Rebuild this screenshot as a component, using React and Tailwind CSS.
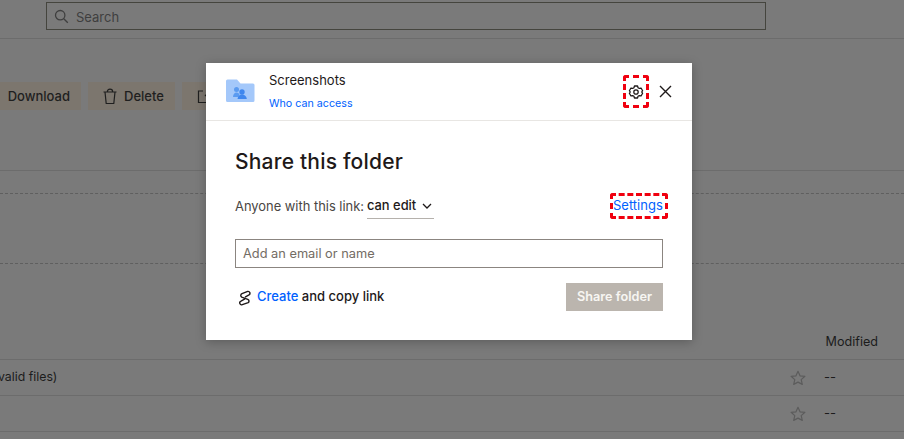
import React from "react";

const font = { fontFamily: "Inter, 'Liberation Sans', sans-serif" };

function Star() {
  return (
    <svg width="16" height="16" viewBox="0 0 16 16" fill="none" stroke="#5c5c5c" strokeWidth="1.2" strokeLinejoin="round">
      <path d="M8 1.3l2 4.500 4.900.5-3.700 3.300 1.100 4.800L8 12.100l-4.300 2.300 1.100-4.800L1.100 6.300 6 5.800z" />
    </svg>
  );
}

function Background() {
  return (
    <div className="flex h-[439px] flex-col bg-[#7a7a7a]">
      <div className="h-[39px] shrink-0 border-b border-[#6c6c6c] pl-[46px] pt-[2px]">
        <div className="flex h-[28px] w-[720px] items-center gap-[7px] border border-[#45453e] pl-[7px]">
          <svg width="15" height="15" viewBox="0 0 15 15" fill="none" stroke="#3f3f3f" strokeWidth="1.3">
            <circle cx="6.200" cy="6.200" r="4.700" />
            <path d="M9.800 9.800l4 4" />
          </svg>
          <span className="mt-[2px] text-[13px] leading-none text-[#3f3f3f]">Search</span>
        </div>
      </div>
      <div className="flex h-[132px] shrink-0 gap-[7px] border-b border-[#6c6c6c] pt-[43px]">
        <div className="flex h-[28px] w-[81px] items-center justify-end bg-[#7c766e] pr-[11px] pt-[1px] text-[13px] font-medium text-[#1f1f1f]">
          Download
        </div>
        <div className="flex h-[28px] w-[87px] items-center gap-[6px] bg-[#7c766e] pl-[14px] pt-[1px] text-[13px] font-medium text-[#1f1f1f]">
          <svg width="16" height="17" viewBox="0 0 16 17" fill="none" stroke="#1f1f1f" strokeWidth="1.200" strokeLinejoin="round">
            <path d="M1.500 4h13M3 4l1.200 11.500h7.600L13 4M5.300 4c0-1.800 1-2.800 2.700-2.800s2.700 1 2.700 2.800" />
          </svg>
          Delete
        </div>
        <div className="flex h-[28px] w-[30px] items-center bg-[#7c766e] pl-[15px]">
          <svg width="15" height="15" viewBox="0 0 15 15" fill="none" stroke="#1f1f1f" strokeWidth="1.200">
            <path d="M6 2H1.500v11.500H13V9M8 7l5-5M9 2h4v4" />
          </svg>
        </div>
      </div>
      <div className="h-[23px] shrink-0 border-b border-dashed border-[#5f5f5f]" />
      <div className="h-[70px] shrink-0 border-b border-dashed border-[#5f5f5f]" />
      <div className="flex h-[96px] shrink-0 items-end justify-end border-b border-[#6c6c6c] pb-[9px] pr-[26px] text-[12.600px] leading-4 text-[#1c1c1c]">
        Modified
      </div>
      <div className="flex h-[36px] shrink-0 items-center justify-between border-b border-[#6c6c6c] pr-[68px] text-[13px] text-[#1c1c1c]">
        <span className="-ml-[2px] text-[12.300px]">valid files)</span>
        <span className="flex items-center gap-[18px]">
          <Star />
          <span>--</span>
        </span>
      </div>
      <div className="flex h-[36px] shrink-0 items-center justify-end border-b border-[#6c6c6c] pr-[68px] text-[13px] text-[#1c1c1c]">
        <span className="flex items-center gap-[18px]">
          <Star />
          <span>--</span>
        </span>
      </div>
    </div>
  );
}

function Modal() {
  return (
    <div className="absolute left-[206px] top-[63px] h-[277px] w-[486px] bg-white shadow-[0_2px_10px_rgba(0,0,0,0.25)]">
      <div className="flex h-[58px] items-start border-b border-[#e8e6e3] pl-[20px] pr-[20px]">
        <svg className="mt-[16px]" width="29" height="24" viewBox="0 0 29 24">
          <path d="M0 2a1.500 1.500 0 0 1 1.500-1.500h9.500l3.500 4H27a1.500 1.500 0 0 1 1.500 1.500v15.500A1.500 1.500 0 0 1 27 23H1.500A1.500 1.500 0 0 1 0 21.500z" fill="#a4c8fa" />
          <circle cx="10.500" cy="10.500" r="2.500" fill="#5b9bf0" />
          <path d="M7 18c.2-3 1.600-4.500 3.500-4.500s2.500 1.200 3 2l-1 2.500z" fill="#5b9bf0" />
          <circle cx="16" cy="13" r="2.700" fill="#3f87ee" />
          <path d="M11.500 20c.3-3 2-4.500 4.500-4.500s4.500 1.500 4.800 4.500z" fill="#3f87ee" />
        </svg>
        <div className="ml-[14px] flex flex-col">
          <span className="mt-[9px] text-[13px] leading-4 text-[#1e1919]">Screenshots</span>
          <span className="mt-[8px] text-[10.700px] leading-4 text-[#0061fe]">Who can access</span>
        </div>
        <div className="ml-auto mt-[12px] flex items-center">
          <div className="relative flex h-[33px] w-[26px] items-center justify-center rounded-[3px] border-[3px] border-dashed border-[#f0000f]">
            <svg width="16" height="16" viewBox="0 0 24 24" fill="none" stroke="#1e1919" strokeWidth="1.900" strokeLinejoin="round">
              <path d="M9.670 3h4.660l.75 2.600 1.900 1.100 2.630-.66 2.330 4.030L20.600 12l1.340 1.930-2.330 4.030-2.630-.66-1.900 1.100-.75 2.600H9.670l-.75-2.600-1.900-1.100-2.630.66L2.060 13.930 3.400 12 2.060 10.070l2.330-4.030 2.630.66 1.900-1.100z" />
              <circle cx="12" cy="12" r="3.300" />
            </svg>
          </div>
          <svg className="ml-[10px]" width="13" height="13" viewBox="0 0 13 13" stroke="#1e1919" strokeWidth="1.400">
            <path d="M1 1l11 11M12 1L1 12" />
          </svg>
        </div>
      </div>
      <div className="pl-[29px] pr-[29px]">
        <h2 className="mt-[27px] text-[21px] font-medium leading-7 tracking-[0.2px] text-[#1e1919]">Share this folder</h2>
        <div className="mt-[15px] flex h-[31px] items-center justify-between">
          <div className="flex items-center text-[12.900px] text-[#4a4643]">
            <span>Anyone with this link:</span>
            <span className="ml-[3px] flex h-[25px] w-[67px] items-center gap-[6px] border-b border-[#b5b1ac] font-medium text-[#1e1919]">
              can edit
              <svg width="10" height="6" viewBox="0 0 10 6" fill="none" stroke="#1e1919" strokeWidth="1.300">
                <path d="M1 1l4 4 4-4" />
              </svg>
            </span>
          </div>
          <div className="-mr-[5px] -mt-[1px] flex h-[26px] w-[58px] items-center rounded-[3px] border-[3px] border-dashed border-[#f0000f] text-[13px] text-[#0061fe]">
            Settings
          </div>
        </div>
        <div className="mt-[17px] flex h-[29px] w-[428px] items-center border border-[#8b8580] pl-[7px] pt-[1px] text-[12.800px] text-[#736c64]">
          Add an email or name
        </div>
        <div className="mt-[15px] flex h-[28px] items-center justify-between">
          <div className="flex items-center text-[13px] font-medium text-[#1e1919]">
            <svg className="ml-[4px] mr-[6px] mt-[2px]" width="12" height="16" viewBox="0 0 12 16" fill="none" stroke="#1e1919" strokeWidth="1.400" strokeLinecap="round" strokeLinejoin="round">
              <path d="M6.500 6.800L10 4.900a1.900 1.900 0 0 0-1.300-3.500L3 3.700a1.900 1.900 0 0 0-.3 3.400L8.800 9.300a1.900 1.900 0 0 1 .4 3.300L3.300 14.700A1.900 1.900 0 0 1 2 11.100l3.500-1.900" />
            </svg>
            <span><span className="text-[#0061fe]">Create</span> and copy link</span>
          </div>
          <div className="flex h-[28px] w-[97px] items-center justify-center bg-[#bbb5ae] text-[12.700px] font-semibold text-[#f7f5f2]">
            Share folder
          </div>
        </div>
      </div>
    </div>
  );
}

export default function App() {
  return (
    <div className="relative h-[439px] w-[904px] overflow-hidden" style={font}>
      <Background />
      <Modal />
    </div>
  );
}
